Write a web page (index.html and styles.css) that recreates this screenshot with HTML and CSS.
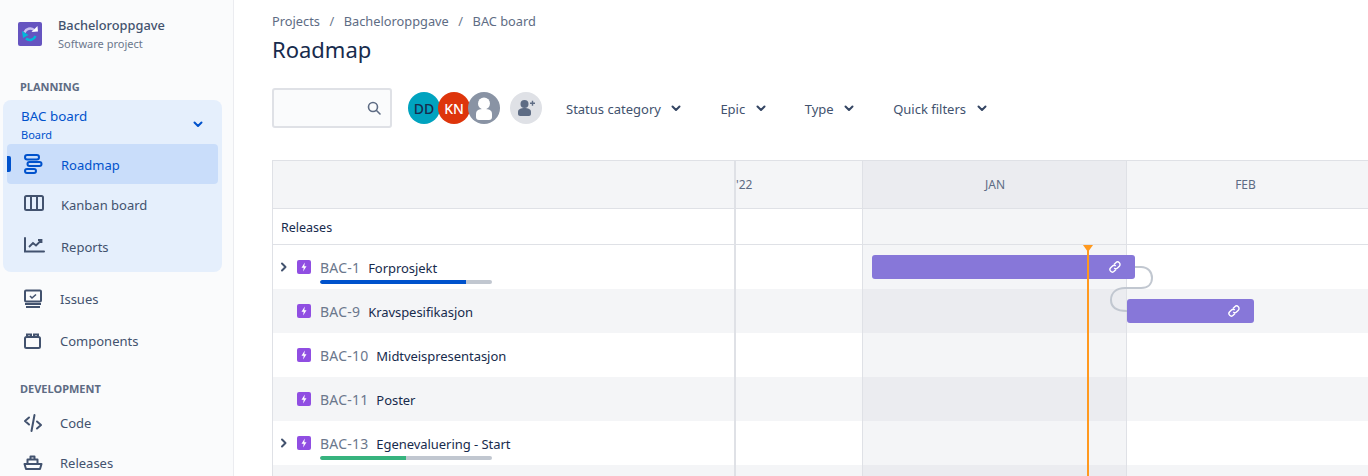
FILE: index.html
```html
<!DOCTYPE html>
<html lang="no">
<head>
<meta charset="utf-8">
<title>Roadmap</title>
<link rel="stylesheet" href="styles.css">
</head>
<body>
<div class="app">
  <aside class="side">
    <div class="proj">
      <svg class="proj-logo" width="24" height="24" viewBox="0 0 24 24"><rect width="24" height="24" rx="2" fill="#6554C0"/><path d="M6.500 10.500a6 6 0 0 1 9.500-2.500" fill="none" stroke="#C7BFF0" stroke-width="2.400"/><path d="M13.500 10l6.500-.5L19.500 4z" fill="#fff"/><path d="M17.500 14a6 6 0 0 1-9.500 2.500" fill="none" stroke="#00B8D9" stroke-width="2.400"/><path d="M4 9l1 7 5.500-3z" fill="#00B8D9"/></svg>
      <div>
        <div class="proj-name">Bacheloroppgave</div>
        <div class="proj-type">Software project</div>
      </div>
    </div>
    <div class="sec sec-plan">PLANNING</div>
    <div class="group">
      <div class="board">
        <div>
          <div class="board-name">BAC board</div>
          <div class="board-type">Board</div>
        </div>
        <svg width="16" height="16" viewBox="0 0 16 16"><path d="M4.500 6.500L8 10l3.500-3.500" fill="none" stroke="#0052CC" stroke-width="2" stroke-linecap="round" stroke-linejoin="round"/></svg>
      </div>
      <a class="item active">
        <svg width="22" height="22" viewBox="0 0 22 22" fill="none" stroke="#0052CC" stroke-width="2"><rect x="2" y="2" width="14" height="4.500" rx="2.250"/><rect x="4.500" y="9" width="14" height="4" rx="2"/><rect x="2" y="16" width="11" height="4" rx="2"/></svg>
        <span>Roadmap</span>
      </a>
      <a class="item item-k">
        <svg width="22" height="22" viewBox="0 0 22 22" fill="none" stroke="#42526E" stroke-width="2"><rect x="2" y="3" width="18" height="14" rx="1.500"/><path d="M8 3v14M14 3v14"/></svg>
        <span>Kanban board</span>
      </a>
      <a class="item item-r">
        <svg width="22" height="22" viewBox="0 0 22 22" fill="none" stroke="#42526E" stroke-width="2"><path d="M2 3v13.500H21" stroke-linecap="round"/><path d="M6 12l4-4 3 2.500 5-5M15 5h3.500v3" stroke-width="1.800"/></svg>
        <span>Reports</span>
      </a>
    </div>
    <a class="link link-issues">
      <svg width="20" height="20" viewBox="0 0 20 20" fill="none" stroke="#42526E" stroke-width="2"><rect x="2" y="1.500" width="16" height="11" rx="1"/><path d="M7 7l2 2 4-3.500" stroke-width="1.600"/><path d="M2 15h16M3 18h14"/></svg>
      <span>Issues</span>
    </a>
    <a class="link link-comp">
      <svg width="20" height="20" viewBox="0 0 20 20" fill="none" stroke="#42526E" stroke-width="2"><rect x="2" y="6" width="15" height="11" rx="1.500"/><path d="M4 5.500V3.500h4v2M11 5.500V3.500h4v2"/></svg>
      <span>Components</span>
    </a>
    <div class="sec sec-dev">DEVELOPMENT</div>
    <a class="link link-code">
      <svg width="20" height="20" viewBox="0 0 20 20" fill="none" stroke="#42526E" stroke-width="2" stroke-linecap="round" stroke-linejoin="round"><path d="M6 4.500L2 8l4 3.500M14 8.500l4 3.500-4 3.500M11.500 2L8.500 18"/></svg>
      <span>Code</span>
    </a>
    <a class="link link-rel">
      <svg width="20" height="20" viewBox="0 0 20 20" fill="none" stroke="#42526E" stroke-width="2" stroke-linejoin="round"><path d="M1.500 11h17l-1.500 5H3z"/><path d="M4.500 10.500V6.500h10v4M7.500 6V3.500h4V6"/></svg>
      <span>Releases</span>
    </a>
  </aside>

  <main class="main">
    <nav class="crumbs">
      <span>Projects</span><i>/</i><span>Bacheloroppgave</span><i>/</i><span>BAC board</span>
    </nav>
    <h1 class="title">Roadmap</h1>
    <div class="filters">
      <div class="search">
        <svg width="16" height="16" viewBox="0 0 16 16" fill="none" stroke="#5E6C84" stroke-width="1.600"><circle cx="7" cy="7" r="4.500"/><path d="M10.500 10.500L14 14" stroke-linecap="round"/></svg>
      </div>
      <div class="avatars">
        <span class="av av-dd">DD</span>
        <span class="av av-kn">KN</span>
        <span class="av av-un">
          <svg width="32" height="32" viewBox="0 0 32 32"><circle cx="16" cy="16" r="16" fill="#8993A4"/><circle cx="16" cy="11.500" r="6" fill="#fff"/><path d="M8 22c0-4 3-5 8-5s8 1 8 5v3c0 2-1 3-3 3H11c-2 0-3-1-3-3z" fill="#fff"/></svg>
        </span>
      </div>
      <span class="add">
        <svg width="20" height="20" viewBox="0 0 20 20" fill="#5E6C84"><circle cx="8.500" cy="6" r="4"/><path d="M2 14c0-3 3-4 6.500-4s6.500 1 6.500 4v2c0 1-1 2-2 2H4c-1 0-2-1-2-2z"/><path d="M14 4.500h1.800V2.700h1.400v1.800H19v1.400h-1.800v1.800h-1.400V5.900H14z"/></svg>
      </span>
      <button class="fbtn fbtn-status"><span>Status category</span><svg width="16" height="16" viewBox="0 0 16 16"><path d="M4.500 6.500L8 10l3.500-3.500" fill="none" stroke="#344563" stroke-width="2" stroke-linecap="round" stroke-linejoin="round"/></svg></button>
      <button class="fbtn fbtn-epic"><span>Epic</span><svg width="16" height="16" viewBox="0 0 16 16"><path d="M4.500 6.500L8 10l3.500-3.500" fill="none" stroke="#344563" stroke-width="2" stroke-linecap="round" stroke-linejoin="round"/></svg></button>
      <button class="fbtn fbtn-type"><span>Type</span><svg width="16" height="16" viewBox="0 0 16 16"><path d="M4.500 6.500L8 10l3.500-3.500" fill="none" stroke="#344563" stroke-width="2" stroke-linecap="round" stroke-linejoin="round"/></svg></button>
      <button class="fbtn"><span>Quick filters</span><svg width="16" height="16" viewBox="0 0 16 16"><path d="M4.500 6.500L8 10l3.500-3.500" fill="none" stroke="#344563" stroke-width="2" stroke-linecap="round" stroke-linejoin="round"/></svg></button>
    </div>

    <section class="chart">
      <div class="row row-head">
        <div class="c-list"></div>
        <div class="c-y">'22</div>
        <div class="c-jan">JAN</div>
        <div class="c-feb">FEB</div>
      </div>
      <div class="row row-rel">
        <div class="c-list rel-label">Releases</div>
        <div class="c-y"></div>
        <div class="c-jan"></div>
        <div class="c-feb"></div>
      </div>
      <div class="row row-issue">
        <div class="c-list">
          <svg class="chev" width="16" height="16" viewBox="0 0 16 16"><path d="M6 4.500L9.500 8 6 11.500" fill="none" stroke="#42526E" stroke-width="2" stroke-linecap="round" stroke-linejoin="round"/></svg>
          <svg class="epic" width="14" height="14" viewBox="0 0 14 14"><rect width="14" height="14" rx="2" fill="#904EE2"/><path d="M7.800 2.500L4.500 7.800h2.200l-.6 3.700 3.400-5.300H7.300z" fill="#fff"/></svg>
          <span class="key">BAC-1</span><span class="name">Forprosjekt</span>
          <div class="prog"><div class="fill fill-blue"></div></div>
        </div>
        <div class="c-y"></div><div class="c-jan"></div><div class="c-feb"></div>
      </div>
      <div class="row row-issue alt">
        <div class="c-list">
          <span class="chev-space"></span>
          <svg class="epic" width="14" height="14" viewBox="0 0 14 14"><rect width="14" height="14" rx="2" fill="#904EE2"/><path d="M7.800 2.500L4.500 7.800h2.200l-.6 3.700 3.400-5.300H7.300z" fill="#fff"/></svg>
          <span class="key">BAC-9</span><span class="name">Kravspesifikasjon</span>
        </div>
        <div class="c-y"></div><div class="c-jan"></div><div class="c-feb"></div>
      </div>
      <div class="row row-issue">
        <div class="c-list">
          <span class="chev-space"></span>
          <svg class="epic" width="14" height="14" viewBox="0 0 14 14"><rect width="14" height="14" rx="2" fill="#904EE2"/><path d="M7.800 2.500L4.500 7.800h2.200l-.6 3.700 3.400-5.300H7.300z" fill="#fff"/></svg>
          <span class="key">BAC-10</span><span class="name">Midtveispresentasjon</span>
        </div>
        <div class="c-y"></div><div class="c-jan"></div><div class="c-feb"></div>
      </div>
      <div class="row row-issue alt">
        <div class="c-list">
          <span class="chev-space"></span>
          <svg class="epic" width="14" height="14" viewBox="0 0 14 14"><rect width="14" height="14" rx="2" fill="#904EE2"/><path d="M7.800 2.500L4.500 7.800h2.200l-.6 3.700 3.400-5.300H7.300z" fill="#fff"/></svg>
          <span class="key">BAC-11</span><span class="name">Poster</span>
        </div>
        <div class="c-y"></div><div class="c-jan"></div><div class="c-feb"></div>
      </div>
      <div class="row row-issue">
        <div class="c-list">
          <svg class="chev" width="16" height="16" viewBox="0 0 16 16"><path d="M6 4.500L9.500 8 6 11.500" fill="none" stroke="#42526E" stroke-width="2" stroke-linecap="round" stroke-linejoin="round"/></svg>
          <svg class="epic" width="14" height="14" viewBox="0 0 14 14"><rect width="14" height="14" rx="2" fill="#904EE2"/><path d="M7.800 2.500L4.500 7.800h2.200l-.6 3.700 3.400-5.300H7.300z" fill="#fff"/></svg>
          <span class="key">BAC-13</span><span class="name">Egenevaluering - Start</span>
          <div class="prog"><div class="fill fill-green"></div></div>
        </div>
        <div class="c-y"></div><div class="c-jan"></div><div class="c-feb"></div>
      </div>
      <div class="row row-issue alt">
        <div class="c-list"></div>
        <div class="c-y"></div><div class="c-jan"></div><div class="c-feb"></div>
      </div>

      <div class="today"></div>
      <svg class="dep" width="60" height="60" viewBox="0 0 60 60" fill="none"><path d="M27 1H33C40 1 44 6 44 12C44 18 40 22 33 22H17C8 22 3 27 3 34C3 41 8 45 19 45" stroke="#C1C7D0" stroke-width="2"/></svg>
      <div class="bar bar-1"><svg width="14" height="14" viewBox="0 0 14 14" fill="none" stroke="#fff" stroke-width="1.400"><path d="M6 4.500l1.800-1.800a2.400 2.400 0 0 1 3.500 3.500L9.500 8a2.400 2.400 0 0 1-3.300.1"/><path d="M8 9.500l-1.800 1.800a2.400 2.400 0 0 1-3.500-3.500L4.500 6a2.400 2.400 0 0 1 3.300-.1"/></svg></div>
      <div class="bar bar-2"><svg width="14" height="14" viewBox="0 0 14 14" fill="none" stroke="#fff" stroke-width="1.400"><path d="M6 4.500l1.800-1.800a2.400 2.400 0 0 1 3.500 3.500L9.500 8a2.400 2.400 0 0 1-3.300.1"/><path d="M8 9.500l-1.800 1.800a2.400 2.400 0 0 1-3.500-3.500L4.500 6a2.400 2.400 0 0 1 3.300-.1"/></svg></div>
    </section>
  </main>
</div>
</body>
</html>
```
FILE: styles.css
```css
* { box-sizing: border-box; }
html, body { margin: 0; height: 476px; overflow: hidden; }
body { font-family: "Noto Sans", "Open Sans", sans-serif; color: #172B4D; background: #fff; font-size: 13px; }
.app { display: flex; height: 476px; overflow: hidden; }

.side { width: 234px; flex: none; background: #FAFBFC; border-right: 1px solid #EBECF0; padding: 0 0 0 3px; }
.proj { display: flex; align-items: center; gap: 16px; padding: 15px 0 0 15px; height: 52px; }
.proj-logo { flex: none; }
.proj-name { font-size: 12.8px; font-weight: 500; line-height: 20px; margin-top: -1px; color: #42526E; }
.proj-type { font-size: 11px; line-height: 16px; margin-top: 1px; color: #6B778C; }
.sec { font-size: 11px; font-weight: 700; line-height: 16px; color: #5E6C84; padding-left: 17px; }
.sec-plan { margin-top: 27px; }
.sec-dev { margin-top: 20px; }
.group { width: 219px; height: 172px; margin-top: 5px; background: #E5EFFC; border-radius: 8px; padding: 4px 4px 0; }
.board { display: flex; justify-content: space-between; align-items: center; padding: 0 12px 0 14px; height: 40px; color: #0052CC; }
.board-name { font-size: 13.4px; line-height: 20px; margin-top: 1px; }
.board-type { font-size: 11px; line-height: 16px; margin-top: 1px; }
.item { display: flex; align-items: center; height: 40px; padding-left: 16px; gap: 16px; color: #42526E; position: relative; font-size: 13px; border-radius: 4px; }
.item svg { flex: none; }
.item span { margin-top: 1px; }
.item.active { background: #C9DDFA; color: #0052CC; }
.item.active::before { content: ""; position: absolute; left: 0; top: 12px; width: 4px; height: 16px; background: #0052CC; border-radius: 0 2px 2px 0; }
.item-r { margin-top: 2px; }
.link { display: flex; align-items: center; gap: 17px; height: 40px; padding-left: 20px; color: #42526E; }
.link-issues { margin-top: 7px; }
.link-comp { margin-top: 2px; }
.link-code { margin-top: 6px; }

.main { flex: 1; min-width: 0; padding-left: 38px; }
.crumbs { display: flex; height: 20px; margin-top: 11px; line-height: 20px; color: #5E6C84; font-size: 12.8px; }
.crumbs i { font-style: normal; padding: 0 9.5px; color: #6B778C; }
.title { margin: 4px 0 0; font-size: 22px; font-weight: 400; line-height: 28px; color: #172B4D; }
.filters { display: flex; align-items: center; margin-top: 25px; height: 40px; }
.search { width: 120px; height: 40px; border: 2px solid #DFE1E6; border-radius: 3px; background: #FAFBFC; display: flex; align-items: center; justify-content: flex-end; padding-right: 8px; }
.avatars { display: flex; margin-left: 16px; }
.av { width: 32px; height: 32px; border-radius: 50%; display: flex; align-items: center; justify-content: center; font-size: 14px; font-weight: 500; }
.av + .av { margin-left: -2px; }
.av-dd { background: #00A3BF; color: #172B4D; }
.av-kn { background: #DE350B; color: #fff; }
.add { width: 32px; height: 32px; border-radius: 50%; background: #DFE1E6; margin-left: 10px; display: flex; align-items: center; justify-content: center; }
.fbtn { display: flex; align-items: center; gap: 7.5px; border: 0; background: none; padding: 0; font: inherit; font-size: 13px; color: #42526E; margin-left: 36px; }
.fbtn span { margin-top: 1px; }
.fbtn-status { margin-left: 24px; }

.chart { position: relative; margin-top: 32px; width: 1096px; border: solid #DFE1E6; border-width: 1px 0 0 1px; }
.row { display: grid; grid-template-columns: 463px 127px 264px 241px; }
.row > div { border-right: 1px solid #DFE1E6; }
.row > .c-list { border-right: 2px solid #DFE1E6; }
.row > .c-feb { border-right: 0; }
.row-head { height: 48px; background: #F4F5F7; border-bottom: 1px solid #DFE1E6; }
.row-head > div { display: flex; align-items: center; justify-content: center; font-size: 12px; color: #5E6C84; }
.row-head .c-y { justify-content: flex-start; }
.row-head .c-jan { background: #EBECF0; padding-left: 1px; }
.row-head .c-feb { padding-right: 4px; }
.row-rel { height: 36px; border-bottom: 1px solid #DFE1E6; }
.row-rel .c-jan { background: #F4F5F7; }
.rel-label { display: flex; align-items: center; padding: 1px 0 0 8px; font-size: 12.5px; color: #172B4D; }
.row-issue { height: 44px; }
.row-issue .c-jan { background: #F4F5F7; }
.row-issue.alt { background: #F4F5F7; }
.row-issue.alt .c-jan { background: #EBECF0; }
.row-issue .c-list { position: relative; display: flex; align-items: flex-start; padding: 14px 0 0 3px; line-height: 18px; }
.chev, .chev-space { width: 16px; height: 16px; flex: none; }
.epic { flex: none; margin-left: 5px; margin-top: 1px; }
.key { color: #6B778C; margin-left: 9px; font-size: 14px; letter-spacing: .2px; }
.name { color: #172B4D; margin-left: 8px; font-size: 13px; letter-spacing: -.05px; }
.prog { position: absolute; left: 47px; top: 35px; width: 172px; height: 4px; border-radius: 2px; background: #C1C7D0; overflow: hidden; }
.fill { height: 4px; border-radius: 2px 0 0 2px; }
.fill-blue { width: 85%; background: #0052CC; }
.fill-green { width: 50%; background: #36B37E; }

.today { position: absolute; left: 814px; top: 84px; bottom: 0; width: 2px; background: #FF991F; z-index: 3; }
.today::before { content: ""; position: absolute; left: -4px; top: 0; border: 5px solid transparent; border-top: 7px solid #FF991F; border-bottom: 0; }
.bar { position: absolute; height: 24px; background: #8777D9; border-radius: 3px; display: flex; align-items: center; justify-content: flex-end; padding-right: 13px; z-index: 2; }
.bar-1 { left: 599px; width: 263px; top: 94px; }
.bar-2 { left: 854px; width: 127px; top: 138px; }
.dep { position: absolute; left: 835px; top: 105px; z-index: 1; }
```
